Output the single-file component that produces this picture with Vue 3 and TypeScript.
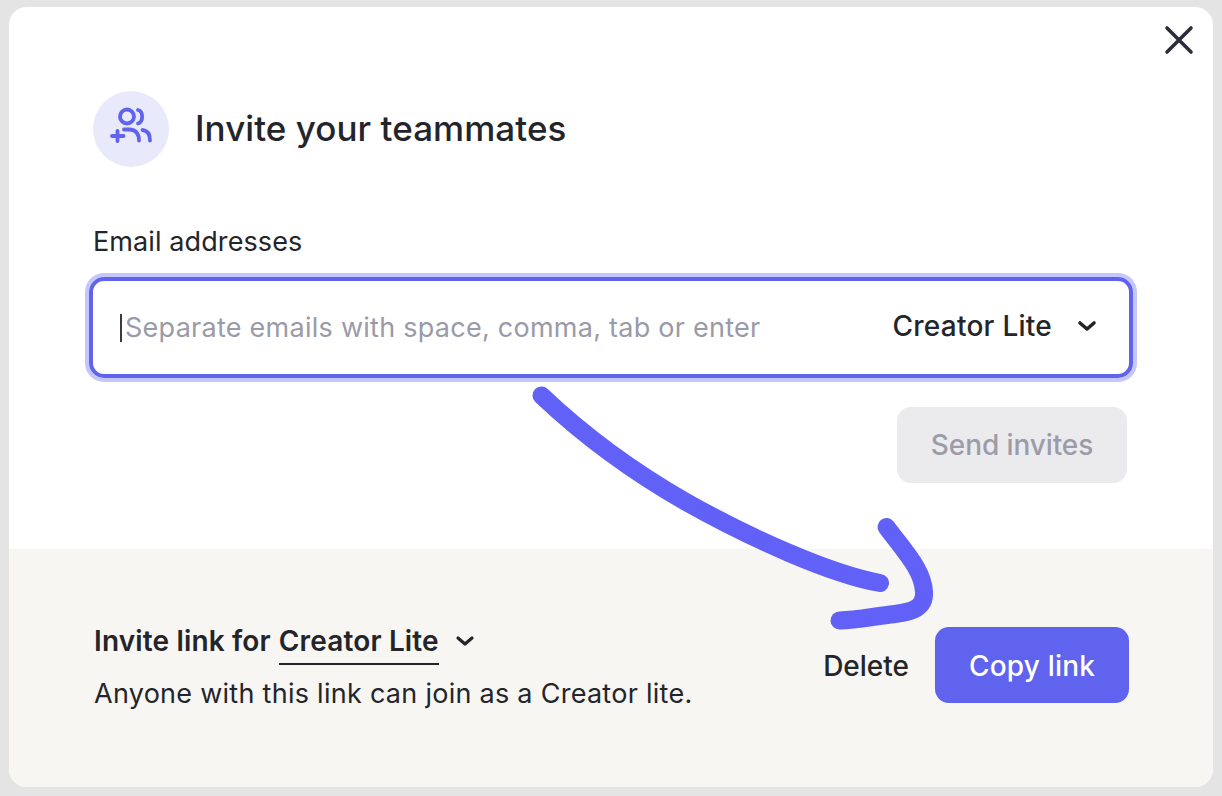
<script setup lang="ts">
const placeholder: string = 'Separate emails with space, comma, tab or enter'
</script>

<template>
  <div class="page">
    <div class="modal">
      <button class="close" aria-label="Close">
        <svg width="30" height="30" viewBox="0 0 30 30" fill="none" stroke="#2b2d38" stroke-width="3.6" stroke-linecap="round">
          <path d="M3 3 L27 27 M27 3 L3 27" />
        </svg>
      </button>

      <div class="top">
        <div class="header">
          <div class="badge">
            <svg width="48" height="44" viewBox="0 0 48 44" fill="none" stroke="#5f63ee" stroke-width="3.8" stroke-linecap="round">
              <circle cx="20" cy="9.5" r="7" />
              <path d="M31 3 C36.5 4 36.5 15 31 16.5" />
              <path d="M5 29 H16.5 M10.5 24 V34" />
              <path d="M17 22.5 H22 C28 22.5 32 26 32 33.5" />
              <path d="M35.5 23 C40 23.5 43 27 43 33.5" />
            </svg>
          </div>
          <h1 class="title">Invite your teammates</h1>
        </div>

        <label class="label">Email addresses</label>
        <div class="field">
          <span class="caret"></span>
          <span class="placeholder">{{ placeholder }}</span>
          <span class="role">Creator Lite</span>
          <svg class="chev" width="20" height="12" viewBox="0 0 20 12" fill="none" stroke="#24252b" stroke-width="3.6" stroke-linecap="round" stroke-linejoin="round">
            <path d="M3 3 L10 9 L17 3" />
          </svg>
        </div>

        <div class="send-row">
          <button class="send">Send invites</button>
        </div>
      </div>

      <div class="footer">
        <div class="info">
          <div class="line">
            <span>Invite link for</span>
            <span class="underlined">Creator Lite</span>
            <svg class="chev2" width="20" height="12" viewBox="0 0 20 12" fill="none" stroke="#24252b" stroke-width="3.2" stroke-linecap="round" stroke-linejoin="round">
              <path d="M3 3 L10 9 L17 3" />
            </svg>
          </div>
          <p class="desc">Anyone with this link can join as a Creator lite.</p>
        </div>
        <div class="actions">
          <button class="delete">Delete</button>
          <button class="copy">Copy link</button>
        </div>
      </div>

      <svg class="arrow" width="1222" height="796" viewBox="0 0 1222 796" fill="none" stroke="#6160f7" stroke-width="18" stroke-linecap="round" stroke-linejoin="round">
        <path d="M541.5 395.5 C580 432 630 470 686 502 C750 538 830 574 880 583" />
        <path d="M886.5 527 C905 552 923 570 924 592 C925 608 912 612 895 614 C875 616 858 620 839.5 620.5" />
      </svg>
    </div>
  </div>
</template>

<style>
html, body { margin: 0; padding: 0; background: #e4e4e4; }
</style>

<style scoped>
.page {
  width: 1222px;
  height: 796px;
  box-sizing: border-box;
  padding: 7px 9px 9px;
  font-family: Inter, "Noto Sans", sans-serif;
  color: #24252b;
}
.modal {
  position: relative;
  height: 780px;
  background: #fff;
  border-radius: 18px;
  overflow: hidden;
  display: flex;
  flex-direction: column;
}
.close {
  position: absolute;
  top: 18px;
  right: 19px;
  padding: 0;
  border: 0;
  background: none;
  line-height: 0;
}
.top {
  height: 542px;
  box-sizing: border-box;
  padding: 84px 80px 0 80px;
}
.header { display: flex; align-items: center; gap: 26px; margin-left: 4px; height: 76px; }
.badge {
  width: 76px;
  height: 76px;
  border-radius: 50%;
  background: #e9e9fc;
  display: flex;
  align-items: center;
  justify-content: center;
}
.title { margin: 0 0 2px; font-size: 35px; line-height: 74px; font-weight: 500; letter-spacing: 0.05px; color: #24252b; }
.label { display: block; margin: 57px 0 0 4px; font-size: 27px; line-height: 36px; font-weight: 400; letter-spacing: 0.1px; color: #24252b; }
.field {
  display: flex;
  align-items: center;
  box-sizing: border-box;
  height: 101px;
  margin: 17px 0 0 0;
  border: 4px solid #5f63ee;
  border-radius: 15px;
  box-shadow: 0 0 0 4px #c5c6f9;
  padding: 0 32px 0 27px;
}
.caret { width: 2px; height: 28px; background: #3a3a3f; margin-right: 3px; }
.placeholder { flex: 1; font-size: 27px; letter-spacing: 0.26px; color: #9a9aa8; }
.role { font-size: 28px; font-weight: 500; letter-spacing: 0.25px; margin-bottom: 4px; }
.chev { margin-left: 25px; margin-bottom: 4px; }
.send-row { display: flex; justify-content: flex-end; margin-top: 29px; padding-right: 6px; }
.send {
  width: 230px;
  height: 76px;
  border: 0;
  border-radius: 14px;
  background: #ebebee;
  color: #9c9ca9;
  font: 500 28px Inter, sans-serif;
  letter-spacing: -0.1px;
}
.footer {
  flex: 1;
  background: #f7f6f2;
  padding: 0 84px 0 85px;
  display: flex;
  justify-content: space-between;
  align-items: flex-start;
}
.line { display: flex; align-items: flex-start; gap: 8px; margin-top: 73px; font-size: 28px; line-height: 38px; font-weight: 600; letter-spacing: 0.15px; }
.underlined { height: 43px; box-sizing: border-box; border-bottom: 2.5px solid #24252b; }
.chev2 { margin: 13px 0 0 8px; }
.desc { margin: 11px 0 0; font-size: 27px; line-height: 36px; font-weight: 400; letter-spacing: 0.27px; }
.actions { display: flex; align-items: center; gap: 26px; margin-top: 78px; }
.delete { border: 0; background: none; padding: 2px 0 0; font: 500 28px Inter, sans-serif; color: #24252b; }
.copy {
  width: 194px;
  height: 76px;
  border: 0;
  border-radius: 14px;
  background: #5f63ee;
  color: #fff;
  font: 500 28px Inter, sans-serif;
  letter-spacing: 0.2px;
  padding-top: 2px;
}
.arrow { position: absolute; left: -9px; top: -7px; pointer-events: none; }
</style>
